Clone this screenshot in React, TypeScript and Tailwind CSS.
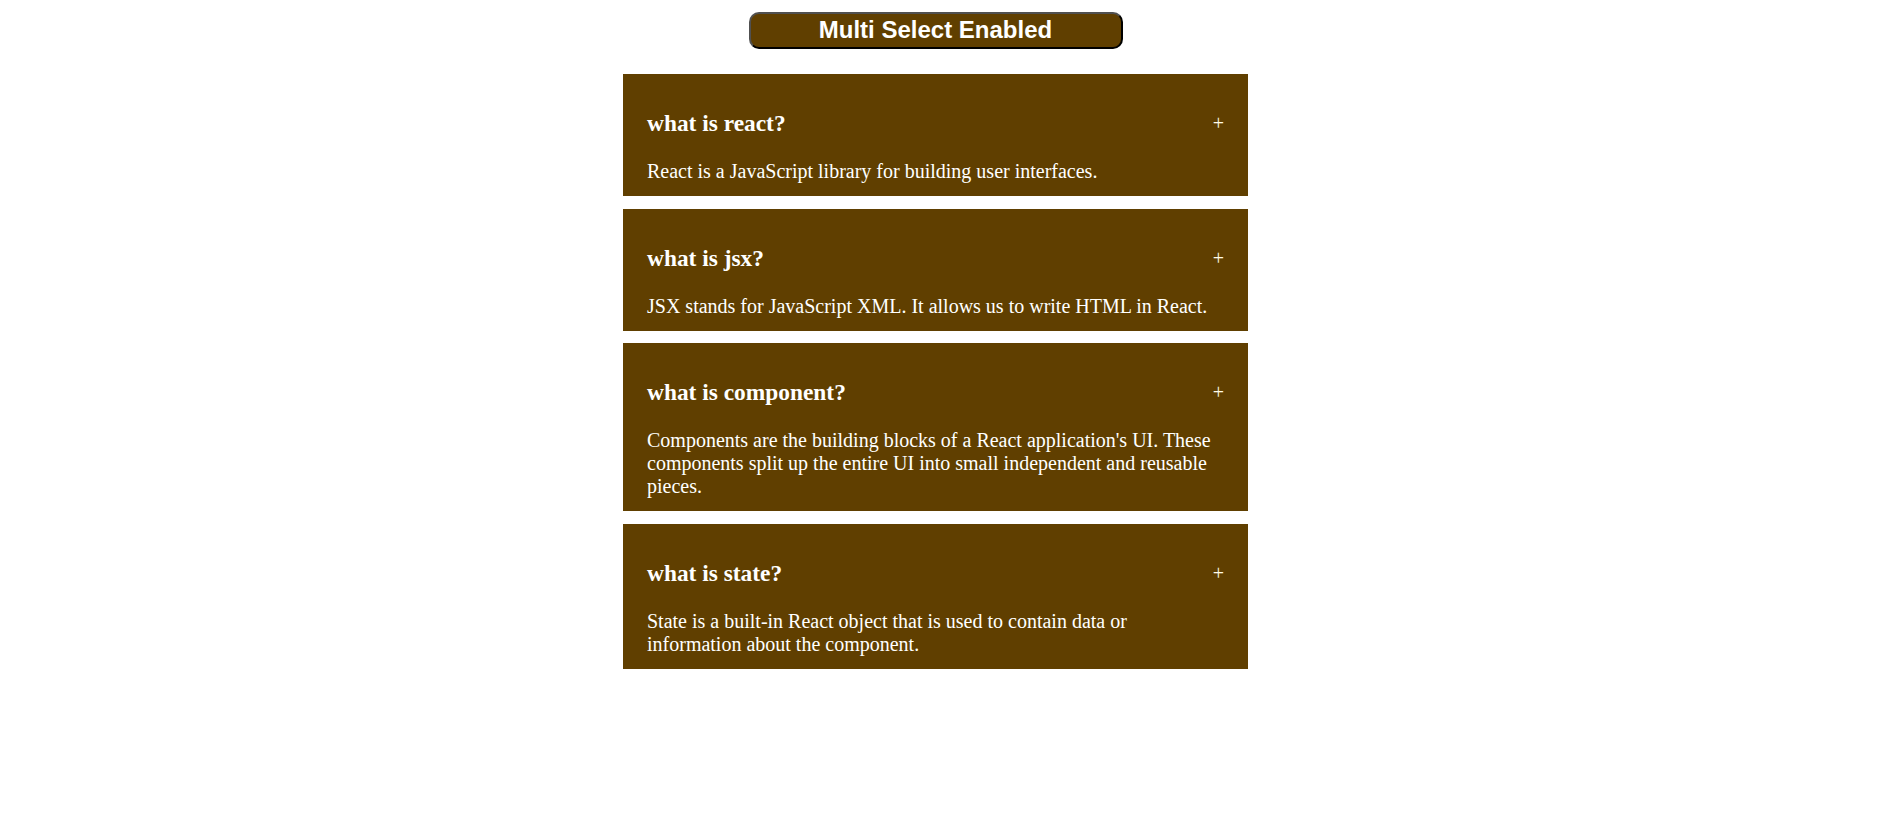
import { useState } from 'react';

interface Item {
  id: string;
  question: string;
  answer: string;
}

const data: Item[] = [
  {
    id: '1',
    question: 'what is react?',
    answer: 'React is a JavaScript library for building user interfaces.',
  },
  {
    id: '2',
    question: 'what is jsx?',
    answer: 'JSX stands for JavaScript XML. It allows us to write HTML in React.',
  },
  {
    id: '3',
    question: 'what is component?',
    answer:
      "Components are the building blocks of a React application's UI. These components split up the entire UI into small independent and reusable pieces.",
  },
  {
    id: '4',
    question: 'what is state?',
    answer:
      'State is a built-in React object that is used to contain data or information about the component.',
  },
];

export default function App() {
  const [multi, setMulti] = useState(true);
  const [open, setOpen] = useState<string[]>(data.map((d) => d.id));

  const toggle = (id: string) => {
    if (multi) {
      setOpen((prev) => (prev.includes(id) ? prev.filter((x) => x !== id) : [...prev, id]));
    } else {
      setOpen((prev) => (prev.includes(id) ? [] : [id]));
    }
  };

  return (
    <div className="min-h-screen bg-white w-[1871px] flex flex-col items-center pt-3">
      <button
        onClick={() => setMulti(!multi)}
        className="w-[374px] h-[37px] pb-[2px] bg-[#603f00] text-white text-[24px] leading-[27px] font-bold rounded-[10px] border-2 border-t-[#505050] border-l-[#505050] border-b-black border-r-black font-['Liberation_Sans',Arial,sans-serif]"
      >
        {multi ? 'Multi Select Enabled' : 'Enable Multi Select'}
      </button>

      {/* Accordion */}
      <div className="w-[625px] mt-[25px] flex flex-col gap-[12.5px] font-['Liberation_Serif','Times_New_Roman',serif] text-white">
        {data.map((item) => (
          <div key={item.id} className="bg-[#603f00] px-6 pt-[36px] pb-[13px]">
            <div
              onClick={() => toggle(item.id)}
              className="flex items-center justify-between cursor-pointer"
            >
              <h3 className="text-[23.4px] leading-[27px] font-bold">{item.question}</h3>
              <span className="text-[20px] leading-[27px] text-[#fffbe8]">+</span>
            </div>
            {open.includes(item.id) && (
              <div className="mt-[23px] text-[20px] leading-[23px]">{item.answer}</div>
            )}
          </div>
        ))}
      </div>
    </div>
  );
}
